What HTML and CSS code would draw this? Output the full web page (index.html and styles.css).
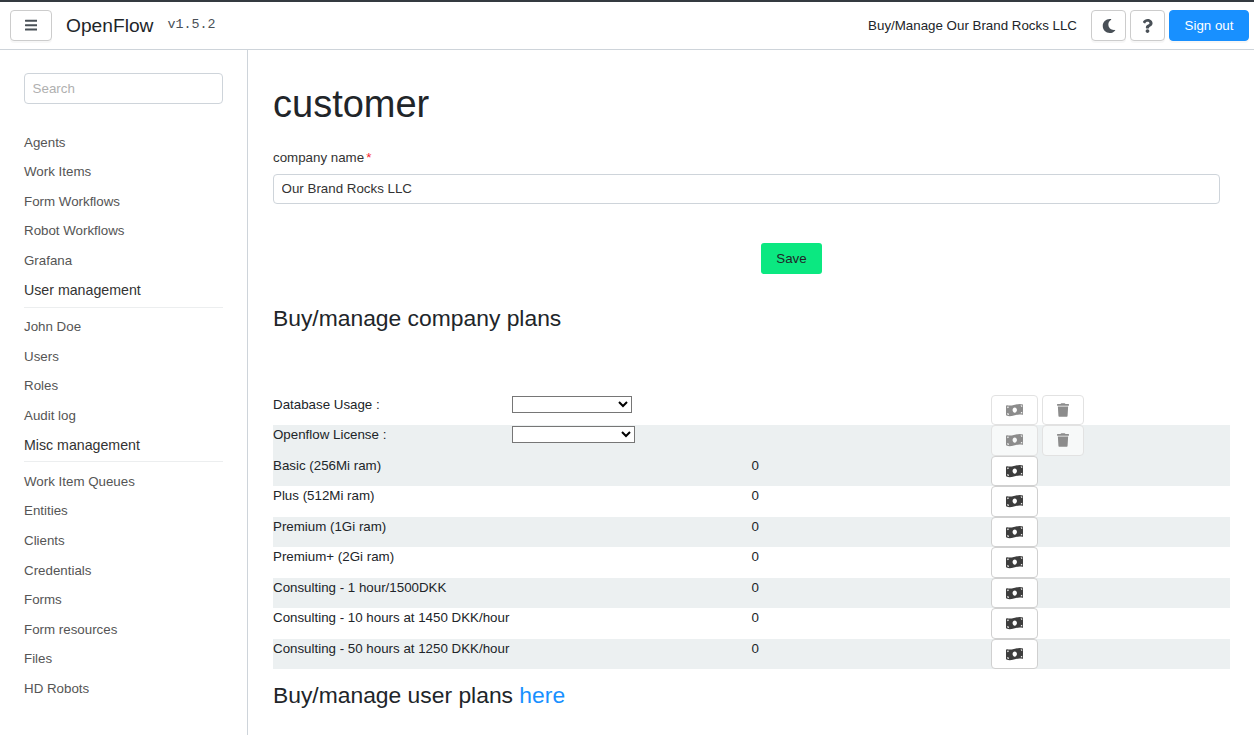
FILE: index.html
```html
<!DOCTYPE html>
<html lang="en">
<head>
<meta charset="utf-8">
<title>OpenFlow</title>
<link rel="stylesheet" href="styles.css">
</head>
<body>
<svg class="defs" width="0" height="0" aria-hidden="true">
  <symbol id="i-money" viewBox="0 0 640 512"><path fill="currentColor" d="M621.16 54.46C582.37 38.19 543.55 32 504.75 32c-123.17-.01-246.33 62.34-369.5 62.34-30.89 0-61.76-3.92-92.65-13.72-3.47-1.1-6.95-1.62-10.35-1.62C15.04 79 0 92.32 0 110.81v317.26c0 12.63 7.23 24.6 18.84 29.46C57.63 473.81 96.45 480 135.25 480c123.17 0 246.34-62.35 369.51-62.35 30.89 0 61.76 3.92 92.65 13.72 3.47 1.1 6.95 1.62 10.35 1.62 17.21 0 32.25-13.32 32.25-31.81V83.93c-.01-12.64-7.24-24.6-18.85-29.47zM48 132.22c20.12 5.04 41.12 7.57 62.72 8.93C104.84 170.54 79 192.69 48 192.69v-60.47zm0 285v-47.78c34.37 0 62.18 27.27 63.71 61.4-22.53-1.81-43.59-6.31-63.71-13.62zM320 352c-44.19 0-80-42.99-80-96 0-53.02 35.82-96 80-96s80 42.98 80 96c0 53.03-35.83 96-80 96zm272 27.78c-17.52-4.39-35.71-6.85-54.32-8.44 5.87-26.08 27.5-45.88 54.32-49.28v57.72zm0-236.11c-30.89-3.91-54.86-29.7-55.81-61.55 19.54 2.17 38.09 6.23 55.81 12.66v48.89z"/></symbol>
  <symbol id="i-trash" viewBox="0 0 448 512"><path fill="currentColor" d="M432 32H312l-9.4-18.7A24 24 0 0 0 281.1 0H166.8a23.72 23.72 0 0 0-21.4 13.3L136 32H16A16 16 0 0 0 0 48v32a16 16 0 0 0 16 16h416a16 16 0 0 0 16-16V48a16 16 0 0 0-16-16zM53.2 467a48 48 0 0 0 47.9 45h245.8a48 48 0 0 0 47.9-45L416 128H32z"/></symbol>
</svg>
<header class="topbar">
  <button class="btn btn-menu" type="button" aria-label="Menu">
    <svg class="icon" width="12.5" height="14.3" viewBox="0 0 448 512"><path fill="currentColor" d="M16 132h416c8.837 0 16-7.163 16-16V76c0-8.837-7.163-16-16-16H16C7.163 60 0 67.163 0 76v40c0 8.837 7.163 16 16 16zm0 160h416c8.837 0 16-7.163 16-16v-40c0-8.837-7.163-16-16-16H16c-8.837 0-16 7.163-16 16v40c0 8.837 7.163 16 16 16zm0 160h416c8.837 0 16-7.163 16-16v-40c0-8.837-7.163-16-16-16H16c-8.837 0-16 7.163-16 16v40c0 8.837 7.163 16 16 16z"/></svg>
  </button>
  <span class="brand">OpenFlow</span>
  <span class="version">v1.5.2</span>
  <span class="spacer"></span>
  <span class="customer">Buy/Manage Our Brand Rocks LLC</span>
  <button class="btn btn-icon" type="button" aria-label="Dark mode">
    <svg class="icon" width="14" height="14" viewBox="0 0 512 512"><path fill="currentColor" d="M283.211 512c78.962 0 151.079-35.925 198.857-94.792 7.068-8.708-.639-21.43-11.562-19.35-124.203 23.654-238.262-71.576-238.262-196.954 0-72.222 38.662-138.635 101.498-174.394 9.686-5.512 7.25-20.197-3.756-22.23A258.156 258.156 0 0 0 283.211 0c-141.309 0-256 114.511-256 256 0 141.309 114.511 256 256 256z"/></svg>
  </button>
  <button class="btn btn-icon btn-help" type="button" aria-label="Help">
    <svg class="icon" width="11" height="14" viewBox="0 0 384 512"><path fill="currentColor" d="M202.021 0C122.202 0 70.503 32.703 29.914 91.026c-7.363 10.58-5.093 25.086 5.178 32.874l43.138 32.709c10.373 7.865 25.132 6.026 33.253-4.148 25.049-31.381 43.63-49.449 82.757-49.449 30.764 0 68.816 19.799 68.816 49.631 0 22.552-18.617 34.134-48.993 51.164-35.423 19.86-82.299 44.576-82.299 106.405V320c0 13.255 10.745 24 24 24h72.471c13.255 0 24-10.745 24-24v-5.773c0-42.86 125.268-44.645 125.268-160.627C377.504 66.256 286.902 0 202.021 0zM192 373.459c-38.196 0-69.271 31.075-69.271 69.271 0 38.195 31.075 69.27 69.271 69.27s69.271-31.075 69.271-69.271-31.075-69.27-69.271-69.27z"/></svg>
  </button>
  <button class="btn btn-signout" type="button">Sign out</button>
</header>
<div class="layout">
  <aside class="sidebar">
    <input class="search" type="text" placeholder="Search">
    <nav class="nav">
      <a class="nav-item">Agents</a>
      <a class="nav-item">Work Items</a>
      <a class="nav-item">Form Workflows</a>
      <a class="nav-item">Robot Workflows</a>
      <a class="nav-item">Grafana</a>
      <div class="nav-group">User management</div>
      <a class="nav-item">John Doe</a>
      <a class="nav-item">Users</a>
      <a class="nav-item">Roles</a>
      <a class="nav-item">Audit log</a>
      <div class="nav-group">Misc management</div>
      <a class="nav-item">Work Item Queues</a>
      <a class="nav-item">Entities</a>
      <a class="nav-item">Clients</a>
      <a class="nav-item">Credentials</a>
      <a class="nav-item">Forms</a>
      <a class="nav-item">Form resources</a>
      <a class="nav-item">Files</a>
      <a class="nav-item">HD Robots</a>
    </nav>
  </aside>
  <main class="content">
    <h1 class="title">customer</h1>
    <label class="field-label" for="company">company name<span class="req">*</span></label>
    <input class="field-input" id="company" type="text" value="Our Brand Rocks LLC">
    <div class="save-row"><button class="btn-save" type="button">Save</button></div>
    <h2 class="section">Buy/manage company plans</h2>
    <div class="plans">
      <div class="row">
        <div>Database Usage :</div>
        <div><select class="sel sel-a"></select></div>
        <div></div>
        <div class="acts">
          <button class="act act-off" type="button" disabled aria-label="Buy"><svg class="bill" width="17.5" height="14"><use href="#i-money"/></svg></button>
          <button class="act act-off act-del" type="button" disabled aria-label="Delete"><svg width="12" height="14"><use href="#i-trash"/></svg></button>
        </div>
      </div>
      <div class="row shade">
        <div>Openflow License :</div>
        <div><select class="sel sel-b"></select></div>
        <div></div>
        <div class="acts">
          <button class="act act-off" type="button" disabled aria-label="Buy"><svg class="bill" width="17.5" height="14"><use href="#i-money"/></svg></button>
          <button class="act act-off act-del" type="button" disabled aria-label="Delete"><svg width="12" height="14"><use href="#i-trash"/></svg></button>
        </div>
      </div>
      <div class="row shade">
        <div>Basic (256Mi ram)</div><div></div><div>0</div>
        <div class="acts"><button class="act" type="button" aria-label="Buy"><svg class="bill" width="17.5" height="14"><use href="#i-money"/></svg></button></div>
      </div>
      <div class="row">
        <div>Plus (512Mi ram)</div><div></div><div>0</div>
        <div class="acts"><button class="act" type="button" aria-label="Buy"><svg class="bill" width="17.5" height="14"><use href="#i-money"/></svg></button></div>
      </div>
      <div class="row shade">
        <div>Premium (1Gi ram)</div><div></div><div>0</div>
        <div class="acts"><button class="act" type="button" aria-label="Buy"><svg class="bill" width="17.5" height="14"><use href="#i-money"/></svg></button></div>
      </div>
      <div class="row">
        <div>Premium+ (2Gi ram)</div><div></div><div>0</div>
        <div class="acts"><button class="act" type="button" aria-label="Buy"><svg class="bill" width="17.5" height="14"><use href="#i-money"/></svg></button></div>
      </div>
      <div class="row shade">
        <div>Consulting - 1 hour/1500DKK</div><div></div><div>0</div>
        <div class="acts"><button class="act" type="button" aria-label="Buy"><svg class="bill" width="17.5" height="14"><use href="#i-money"/></svg></button></div>
      </div>
      <div class="row">
        <div>Consulting - 10 hours at 1450 DKK/hour</div><div></div><div>0</div>
        <div class="acts"><button class="act" type="button" aria-label="Buy"><svg class="bill" width="17.5" height="14"><use href="#i-money"/></svg></button></div>
      </div>
      <div class="row shade">
        <div>Consulting - 50 hours at 1250 DKK/hour</div><div></div><div>0</div>
        <div class="acts"><button class="act" type="button" aria-label="Buy"><svg class="bill" width="17.5" height="14"><use href="#i-money"/></svg></button></div>
      </div>
    </div>
    <h2 class="section section-user">Buy/manage user plans <a class="link">here</a></h2>
  </main>
</div>
</body>
</html>
```

FILE: styles.css
```css
* { box-sizing: border-box; }
html, body { height: 100%; }
body {
  margin: 0;
  overflow: hidden;
  background: #fff;
  color: #212529;
  font-family: "Liberation Sans", Arial, sans-serif;
  font-size: 13.33px;
  display: flex;
  flex-direction: column;
}
.defs { flex: none; }
.topbar {
  flex: none;
  height: 50px;
  border-top: 2px solid #343a40;
  border-bottom: 1px solid #ced4da;
  display: flex;
  align-items: center;
  padding: 0 5px 0 10px;
}
.btn {
  height: 31px;
  background: #fff;
  border: 1px solid #ccc;
  border-radius: 4px;
  box-shadow: 0 2px 0 rgba(0, 0, 0, .03);
  color: #495057;
  display: flex;
  align-items: center;
  justify-content: center;
  padding: 0;
  font-family: inherit;
}
.btn-menu { width: 42px; }
.brand { margin-left: 14px; font-size: 19.2px; color: #212529; }
.version { margin: 0 0 2px 14px; font-family: "Liberation Mono", monospace; font-size: 13.33px; color: #495057; }
.spacer { flex: 1; }
.customer { margin-right: 14px; font-size: 13.33px; }
.btn-icon { width: 35px; margin-right: 4px; }
.btn-signout { width: 80px; background: #1890ff; border-color: #1890ff; color: #fff; font-size: 13.33px; }
.layout { flex: 1; display: flex; min-height: 0; }
.sidebar {
  flex: none;
  width: 248px;
  border-right: 1px solid #ced4da;
  padding: 23px 24px 0;
  display: flex;
  flex-direction: column;
}
.search {
  width: 199px;
  height: 31px;
  border: 1px solid #ced4da;
  border-radius: 4px;
  padding: 0 7.6px;
  font: inherit;
  outline: none;
}
.search::placeholder { color: #b0b0b0; }
.nav { margin-top: 23.5px; display: flex; flex-direction: column; }
.nav-item { flex: none; height: 29.57px; display: flex; align-items: center; color: #555; }
.nav-group {
  flex: none;
  height: 32.2px;
  padding-top: 7px;
  margin-bottom: 4.3px;
  color: #333;
  font-size: 14.2px;
  border-bottom: 1px solid #eceeef;
}
.content { flex: 1; min-width: 0; padding: 0 24px 0 25px; }
.title { margin: 31px 0 0; font-size: 38px; line-height: 46px; font-weight: 400; color: #212529; }
.field-label { display: block; margin-top: 23px; line-height: 16px; color: #333; }
.req { color: #f5222d; margin-left: 2px; }
.field-input {
  display: block;
  width: 947px;
  height: 30px;
  margin-top: 8px;
  border: 1px solid #ced4da;
  border-radius: 4px;
  padding: 0 7.6px 2px;
  font: inherit;
  color: #333;
  outline: none;
}
.save-row { margin-top: 39px; padding-left: 488px; }
.btn-save {
  width: 61px;
  height: 31px;
  border: 0;
  border-radius: 3px;
  background: #0be881;
  color: #212529;
  font: inherit;
  padding: 0;
}
.section { margin: 30px 0 0; font-size: 22.85px; line-height: 28px; font-weight: 400; color: #212529; }
.plans { margin-top: 62.9px; width: 957px; }
.row {
  display: grid;
  grid-template-columns: 239px 239.6px 239.4px 1fr;
  height: 30.5px;
  line-height: 19px;
}
.shade { background: #ecf0f1; }
.acts { display: flex; gap: 4px; }
.act {
  width: 47px;
  height: 30.5px;
  background: #fff;
  border: 1px solid #d0d0d0;
  border-radius: 4px;
  color: #3d3d3d;
  display: flex;
  align-items: center;
  justify-content: center;
  padding: 0 0 .5px;
}
.act-off { background: rgba(255, 255, 255, .6); border-color: #e2e2e2; color: #8c8c8c; }
.act-del { width: 42px; }
.sel { display: block; height: 17px; margin-top: 1px; background: #fff; border: 1px solid #767676; border-radius: 0; font-size: 13.33px; }
.sel-a { width: 120px; }
.sel-b { width: 123px; }
.section-user { margin-top: 11.6px; }
.link { color: #1890ff; }
```
